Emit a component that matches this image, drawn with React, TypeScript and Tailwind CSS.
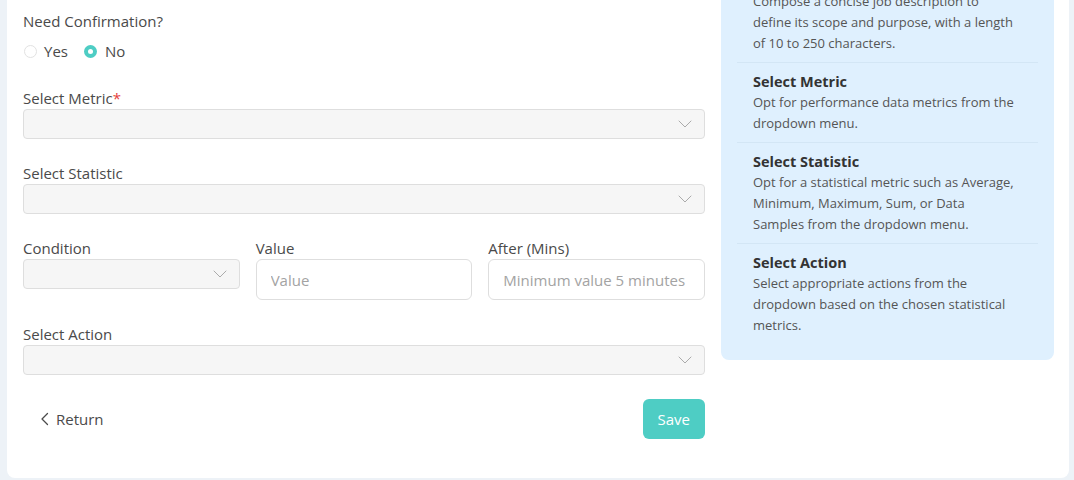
import React from 'react';

const font = { fontFamily: '"Open Sans", "Noto Sans", sans-serif' };

const Chevron = ({ className = '' }: { className?: string }) => (
  <svg viewBox="0 0 24 24" className={className} fill="none" stroke="currentColor" strokeWidth={1} strokeLinecap="round" strokeLinejoin="round">
    <path d="m6 9 6 6 6-6" />
  </svg>
);

const SelectBox = () => (
  <div className="flex h-[30px] w-full items-center justify-end rounded-[4px] border border-[#dedede] bg-[#f6f6f6] pr-[7px]">
    <Chevron className="h-6 w-6 text-[#ababab]" />
  </div>
);

const Label = ({ children, required }: { children: React.ReactNode; required?: boolean }) => (
  <div className="mb-px text-[15px] leading-5 text-[#4a4a4a]">
    {children}
    {required && <span className="text-[#e53e3e]">*</span>}
  </div>
);

// copy is broken into the same lines as the design
const intro = ['Compose a concise job description to', 'define its scope and purpose, with a length', 'of 10 to 250 characters.'];

const tips = [
  {
    title: 'Select Metric',
    lines: ['Opt for performance data metrics from the', 'dropdown menu.'],
  },
  {
    title: 'Select Statistic',
    lines: ['Opt for a statistical metric such as Average,', 'Minimum, Maximum, Sum, or Data', 'Samples from the dropdown menu.'],
  },
  {
    title: 'Select Action',
    lines: ['Select appropriate actions from the', 'dropdown based on the chosen statistical', 'metrics.'],
  },
];

const Body = ({ lines }: { lines: string[] }) => (
  <p className="whitespace-nowrap text-[13px] leading-[21px] text-[#555]">
    {lines.map((l) => (
      <span key={l} className="block">
        {l}
      </span>
    ))}
  </p>
);

export default function App() {
  return (
    <div className="h-[480px] overflow-hidden bg-[#edf2f7] pb-[2px] pl-[7px] pr-[5px]" style={font}>
      <div className="flex h-full items-start gap-4 rounded-b-lg bg-white pl-4 pr-[15px]">
        {/* form */}
        <div className="flex-1 pt-[11px]">
          <Label>Need Confirmation?</Label>
          <div className="mt-[10px] flex items-center text-[15px] leading-5 text-[#4a4a4a]">
            <span className="ml-px h-[13px] w-[13px] rounded-full border border-[#e2e2e2] bg-white" />
            <span className="ml-[7px]">Yes</span>
            <span className="ml-4 flex h-[13px] w-[13px] items-center justify-center rounded-full bg-[#4ecdc4]">
              <span className="h-[5px] w-[5px] rounded-full bg-white" />
            </span>
            <span className="ml-[8px]">No</span>
          </div>

          <div className="mt-[27px]">
            <Label required>Select Metric</Label>
            <SelectBox />
          </div>

          <div className="mt-6">
            <Label>Select Statistic</Label>
            <SelectBox />
          </div>

          <div className="mt-6 grid grid-cols-3 gap-4">
            <div>
              <Label>Condition</Label>
              <SelectBox />
            </div>
            <div>
              <Label>Value</Label>
              <input
                placeholder="Value"
                className="h-[41px] w-full rounded-md border border-[#dedede] bg-white px-[14px] text-[15px] text-[#4a4a4a] outline-none placeholder:text-[#a3a3a3]"
              />
            </div>
            <div>
              <Label>After (Mins)</Label>
              <input
                placeholder="Minimum value 5 minutes"
                className="h-[41px] w-full rounded-md border border-[#dedede] bg-white px-[14px] text-[15px] text-[#4a4a4a] outline-none placeholder:text-[#a3a3a3]"
              />
            </div>
          </div>

          <div className="mt-6">
            <Label>Select Action</Label>
            <SelectBox />
          </div>

          <div className="mt-6 flex items-center justify-between">
            <button className="flex items-center gap-[3px] pl-[14px] text-[15px] text-[#4a4a4a]">
              <svg viewBox="0 0 16 16" className="h-4 w-4" fill="none" stroke="currentColor" strokeWidth={1.3} strokeLinecap="round" strokeLinejoin="round">
                <path d="M10.5 2.5 5 8l5.5 5.5" />
              </svg>
              Return
            </button>
            <button className="h-10 rounded-md bg-[#4ecdc4] px-[15px] text-[15px] text-white">Save</button>
          </div>
        </div>

        {/* help panel */}
        <div className="-mt-[46px] w-[333px] rounded-b-lg bg-[#dff0fe] px-4 pb-4 pt-4">
          <div className="px-4 pb-2">
            <div className="text-[14.5px] font-bold leading-[21px] text-[#333]">Job Description</div>
            <Body lines={intro} />
          </div>
          {tips.map((t) => (
            <div key={t.title} className="border-t border-[#d3e6f5] px-4 pb-2 pt-2">
              <div className="text-[14.5px] font-bold leading-[21px] text-[#333]">{t.title}</div>
              <Body lines={t.lines} />
            </div>
          ))}
        </div>
      </div>
    </div>
  );
}
